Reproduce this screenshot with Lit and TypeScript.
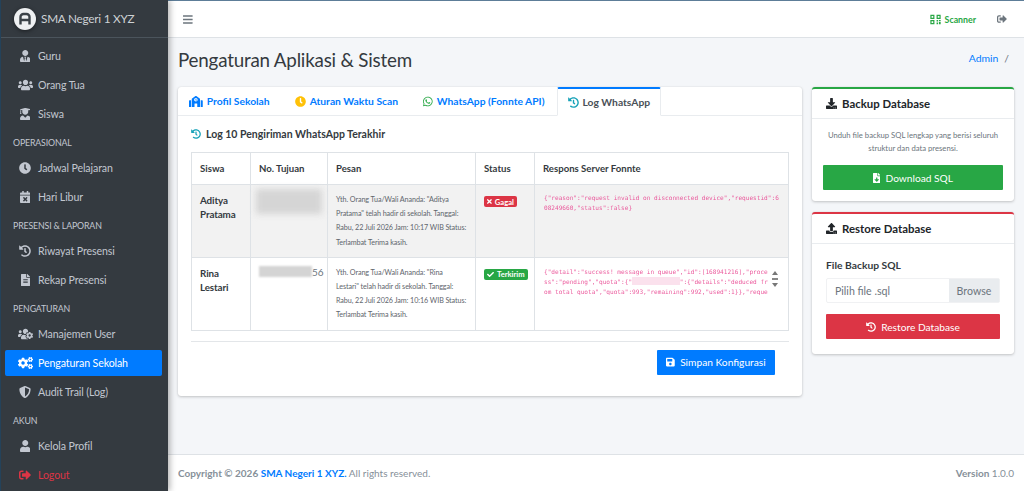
import { LitElement, html, css, svg } from "lit";
import { customElement } from "lit/decorators.js";

// font-awesome 5 style glyphs: [viewBox width, path]
const ICONS: Record<string, [number, string]> = {
  tie: [448, "M224 256c70.7 0 128-57.3 128-128S294.7 0 224 0 96 57.3 96 128s57.3 128 128 128zm95.8 32.6L272 480l-32-136 32-56h-96l32 56-32 136-47.8-191.4C56.9 292 0 350.3 0 422.4V464c0 26.5 21.5 48 48 48h352c26.5 0 48-21.5 48-48v-41.6c0-72.1-56.9-130.4-128.2-133.8z"],
  users: [640, "M96 224c35.3 0 64-28.7 64-64s-28.7-64-64-64-64 28.7-64 64 28.7 64 64 64zm448 0c35.3 0 64-28.7 64-64s-28.7-64-64-64-64 28.7-64 64 28.7 64 64 64zm32 32h-64c-17.6 0-33.5 7.1-45.1 18.6 40.3 22.1 68.9 62 75.1 109.4h66c17.7 0 32-14.3 32-32v-32c0-35.3-28.7-64-64-64zm-256 0c61.9 0 112-50.1 112-112S381.9 32 320 32 208 82.1 208 144s50.1 112 112 112zm76.8 32h-8.3c-20.8 10-43.9 16-68.5 16s-47.6-6-68.5-16h-8.3C179.6 288 128 339.6 128 403.2V432c0 26.5 21.5 48 48 48h288c26.5 0 48-21.5 48-48v-28.8c0-63.6-51.6-115.2-115.2-115.2zm-223.7-13.4C161.5 263.1 145.6 256 128 256H64c-35.3 0-64 28.7-64 64v32c0 17.7 14.3 32 32 32h65.9c6.3-47.4 34.9-87.3 75.2-109.4z"],
  grad: [448, "M319.4 320.6L224 416l-95.4-95.4C57.1 323.7 0 382.2 0 454.4v9.6c0 26.5 21.5 48 48 48h352c26.5 0 48-21.5 48-48v-9.6c0-72.2-57.1-130.7-128.6-133.8zM13.6 79.8l6.4 1.5v58.4c-7 4.2-12 11.5-12 20.3 0 8.4 4.6 15.4 11.1 19.7L3.5 242c-1.7 6.9 2.1 14 7.6 14h41.8c5.5 0 9.3-7.1 7.6-14l-15.6-62.3C51.4 175.4 56 168.4 56 160c0-8.8-5-16.1-12-20.3V87.1l66 15.9c-8.6 17.2-14 36.4-14 57 0 70.7 57.3 128 128 128s128-57.3 128-128c0-20.6-5.3-39.8-14-57l96.3-23.2c18.2-4.4 18.2-27.1 0-31.5l-190.4-46c-13-3.1-26.7-3.1-39.7 0L13.6 48.2c-18.1 4.4-18.1 27.2 0 31.6z"],
  clock: [512, "M256,8C119,8,8,119,8,256S119,504,256,504,504,393,504,256,393,8,256,8Zm92.49,313h0l-20,25a16,16,0,0,1-22.49,2.5h0l-67-49.72a40,40,0,0,1-15-31.23V112a16,16,0,0,1,16-16h32a16,16,0,0,1,16,16V256l58,42.5A16,16,0,0,1,348.49,321Z"],
  calx: [448, "M436 160H12c-6.6 0-12-5.4-12-12v-36c0-26.5 21.5-48 48-48h48V12c0-6.6 5.4-12 12-12h40c6.6 0 12 5.4 12 12v52h128V12c0-6.6 5.4-12 12-12h40c6.6 0 12 5.4 12 12v52h48c26.5 0 48 21.5 48 48v36c0 6.6-5.4 12-12 12zM12 192h424c6.6 0 12 5.4 12 12v260c0 26.5-21.5 48-48 48H48c-26.5 0-48-21.5-48-48V204c0-6.6 5.4-12 12-12zm257.3 160l48.1-48.1c4.7-4.7 4.7-12.3 0-17l-28.3-28.3c-4.7-4.7-12.3-4.7-17 0L224 306.7l-48.1-48.1c-4.7-4.7-12.3-4.7-17 0l-28.3 28.3c-4.7 4.7-4.7 12.3 0 17l48.1 48.1-48.1 48.1c-4.7 4.7-4.7 12.3 0 17l28.3 28.3c4.7 4.7 12.3 4.7 17 0l48.1-48.1 48.1 48.1c4.7 4.7 12.3 4.7 17 0l28.3-28.3c4.7-4.7 4.7-12.3 0-17L269.3 352z"],
  history: [512, "M504 255.531c.253 136.64-111.18 248.372-247.82 248.468-59.015.042-113.223-20.53-155.822-54.911-11.077-8.94-11.905-25.541-1.839-35.607l11.267-11.267c8.609-8.609 22.353-9.551 31.891-1.984C173.062 425.135 212.781 440 256 440c101.705 0 184-82.311 184-184 0-101.705-82.311-184-184-184-48.814 0-93.149 18.969-126.068 49.932l50.754 50.754c10.08 10.08 2.941 27.314-11.313 27.314H24c-8.837 0-16-7.163-16-16V38.627c0-14.254 17.234-21.393 27.314-11.314l49.372 49.372C129.209 34.136 189.552 8 256 8c136.81 0 247.747 110.78 248 247.531zm-180.912 78.784l9.823-12.63c8.138-10.463 6.253-25.542-4.21-33.679L288 256.349V152c0-13.255-10.745-24-24-24h-16c-13.255 0-24 10.745-24 24v135.651l65.409 50.874c10.463 8.137 25.541 6.253 33.679-4.21z"],
  file: [384, "M224 136V0H24C10.7 0 0 10.7 0 24v464c0 13.3 10.7 24 24 24h336c13.3 0 24-10.7 24-24V160H248c-13.2 0-24-10.8-24-24zm64 236c0 6.6-5.4 12-12 12H108c-6.6 0-12-5.4-12-12v-8c0-6.6 5.4-12 12-12h168c6.6 0 12 5.4 12 12v8zm0-64c0 6.6-5.4 12-12 12H108c-6.6 0-12-5.4-12-12v-8c0-6.6 5.4-12 12-12h168c6.6 0 12 5.4 12 12v8zm0-72v8c0 6.6-5.4 12-12 12H108c-6.6 0-12-5.4-12-12v-8c0-6.6 5.4-12 12-12h168c6.6 0 12 5.4 12 12zm96-114.1v6.1H256V0h6.1c6.4 0 12.5 2.5 17 7l97.9 98c4.5 4.5 7 10.6 7 16.9z"],
  userscog: [640, "M610.5 341.3c2.6-14.1 2.6-28.5 0-42.6l25.8-14.9c3-1.7 4.3-5.2 3.3-8.5-6.7-21.6-18.2-41.2-33.2-57.4-2.3-2.5-6-3.1-9-1.4l-25.8 14.9c-10.9-9.3-23.4-16.5-36.9-21.3v-29.8c0-3.4-2.4-6.4-5.7-7.1-22.3-5-45-4.8-66.2 0-3.3.7-5.7 3.7-5.7 7.1v29.8c-13.5 4.8-26 12-36.9 21.3l-25.8-14.9c-2.9-1.7-6.7-1.1-9 1.4-15 16.2-26.5 35.8-33.2 57.4-1 3.3.4 6.8 3.3 8.5l25.8 14.9c-2.6 14.1-2.6 28.5 0 42.6l-25.8 14.9c-3 1.7-4.3 5.2-3.3 8.5 6.7 21.6 18.2 41.1 33.2 57.4 2.3 2.5 6 3.1 9 1.4l25.8-14.9c10.9 9.3 23.4 16.5 36.9 21.3v29.8c0 3.4 2.4 6.4 5.7 7.1 22.3 5 45 4.8 66.2 0 3.3-.7 5.7-3.7 5.7-7.1v-29.8c13.5-4.8 26-12 36.9-21.3l25.8 14.9c2.9 1.7 6.7 1.1 9-1.4 15-16.2 26.5-35.8 33.2-57.4 1-3.3-.4-6.8-3.3-8.5l-25.8-14.9zM496 368.5c-26.8 0-48.5-21.8-48.5-48.5s21.8-48.5 48.5-48.5 48.5 21.8 48.5 48.5-21.7 48.5-48.5 48.5zM96 224c35.3 0 64-28.7 64-64s-28.7-64-64-64-64 28.7-64 64 28.7 64 64 64zm224 32c1.9 0 3.7-.5 5.6-.6 8.3-21.7 20.5-42.1 36.3-59.2 7.4-8 17.9-12.6 28.9-12.6 6.9 0 13.7 1.8 19.6 5.3l7.9 4.6c.8-.5 1.6-.9 2.4-1.4 7-14.6 11.2-30.8 11.2-48 0-61.9-50.1-112-112-112S208 82.1 208 144c0 61.9 50.1 112 112 112zm105.2 194.5c-2.3-1.2-4.6-2.6-6.8-3.9-8.2 4.8-15.3 9.8-27.5 9.8-10.9 0-21.4-4.6-28.9-12.6-18.3-19.8-32.3-43.9-40.2-69.6-10.7-34.5 24.9-49.7 25.8-50.3-.1-2.6-.1-5.2 0-7.8l-7.9-4.6c-3.8-2.2-7-5-9.8-8.1-3.3.2-6.5.6-9.8.6-24.6 0-47.6-6-68.5-16h-8.3C179.6 288 128 339.6 128 403.2V432c0 26.5 21.5 48 48 48h255.4c-3.7-6-6.2-12.8-6.2-20.3v-9.2zM173.1 274.6C161.5 263.1 145.6 256 128 256H64c-35.3 0-64 28.7-64 64v32c0 17.7 14.3 32 32 32h65.9c6.3-47.4 34.9-87.3 75.2-109.4z"],
  cogs: [640, "M512.1 191l-8.2 14.3c-3 5.3-9.4 7.5-15.1 5.4-11.8-4.4-22.6-10.7-32.1-18.6-4.6-3.8-5.8-10.5-2.8-15.7l8.2-14.3c-6.9-8-12.3-17.3-15.9-27.4h-16.5c-6 0-11.2-4.3-12.2-10.3-2-12-2.1-24.6 0-37.1 1-6 6.2-10.4 12.2-10.4h16.5c3.6-10.1 9-19.4 15.9-27.4l-8.2-14.3c-3-5.2-1.9-11.9 2.8-15.7 9.5-7.9 20.4-14.2 32.1-18.6 5.7-2.1 12.1.1 15.1 5.4l8.2 14.3c10.5-1.9 21.2-1.9 31.7 0L552 6.3c3-5.3 9.4-7.5 15.1-5.4 11.8 4.4 22.6 10.7 32.1 18.6 4.6 3.8 5.8 10.5 2.8 15.7l-8.2 14.3c6.9 8 12.3 17.3 15.9 27.4h16.5c6 0 11.2 4.3 12.2 10.3 2 12 2.1 24.6 0 37.1-1 6-6.2 10.4-12.2 10.4h-16.5c-3.6 10.1-9 19.4-15.9 27.4l8.2 14.3c3 5.2 1.9 11.9-2.8 15.7-9.5 7.9-20.4 14.2-32.1 18.6-5.7 2.1-12.1-.1-15.1-5.4l-8.2-14.3c-10.4 1.9-21.2 1.9-31.7 0zm-10.5-58.8c38.5 29.6 82.4-14.3 52.8-52.8-38.5-29.7-82.4 14.3-52.8 52.8zM386.3 286.1l33.7 16.8c10.1 5.8 14.5 18.1 10.5 29.1-8.9 24.2-26.4 46.4-42.6 65.8-7.4 8.9-20.2 11.1-30.3 5.3l-29.1-16.8c-16 13.7-34.6 24.6-54.9 31.7v33.6c0 11.6-8.3 21.6-19.7 23.6-24.6 4.2-50.4 4.4-75.9 0-11.5-2-20-11.9-20-23.6V418c-20.3-7.2-38.9-18-54.9-31.7L74 403c-10 5.8-22.9 3.6-30.3-5.3-16.2-19.4-33.3-41.6-42.2-65.7-4-10.9.4-23.2 10.5-29.1l33.3-16.8c-3.9-20.9-3.9-42.4 0-63.4L12 205.8c-10.1-5.8-14.6-18.1-10.5-29 8.9-24.2 26-46.4 42.2-65.8 7.4-8.9 20.2-11.1 30.3-5.3l29.1 16.8c16-13.7 34.6-24.6 54.9-31.7V57.1c0-11.5 8.2-21.5 19.6-23.5 24.6-4.2 50.5-4.4 76-.1 11.5 2 20 11.9 20 23.6v33.6c20.3 7.2 38.9 18 54.9 31.7l29.1-16.8c10-5.8 22.9-3.6 30.3 5.3 16.2 19.4 33.2 41.6 42.1 65.8 4 10.9.1 23.2-10 29.1l-33.7 16.8c3.9 21 3.9 42.5 0 63.5zm-117.6 21.1c59.2-77-28.7-164.9-105.7-105.7-59.2 77 28.7 164.9 105.7 105.7zm243.4 182.7l-8.2 14.3c-3 5.3-9.4 7.5-15.1 5.4-11.8-4.4-22.6-10.7-32.1-18.6-4.6-3.8-5.8-10.5-2.8-15.7l8.2-14.3c-6.9-8-12.3-17.3-15.9-27.4h-16.5c-6 0-11.2-4.3-12.2-10.3-2-12-2.1-24.6 0-37.1 1-6 6.2-10.4 12.2-10.4h16.5c3.6-10.1 9-19.4 15.9-27.4l-8.2-14.3c-3-5.2-1.9-11.9 2.8-15.7 9.5-7.9 20.4-14.2 32.1-18.6 5.7-2.1 12.1.1 15.1 5.4l8.2 14.3c10.5-1.9 21.2-1.9 31.7 0l8.2-14.3c3-5.3 9.4-7.5 15.1-5.4 11.8 4.4 22.6 10.7 32.1 18.6 4.6 3.8 5.8 10.5 2.8 15.7l-8.2 14.3c6.9 8 12.3 17.3 15.9 27.4h16.5c6 0 11.2 4.3 12.2 10.3 2 12 2.1 24.6 0 37.1-1 6-6.2 10.4-12.2 10.4h-16.5c-3.6 10.1-9 19.4-15.9 27.4l8.2 14.3c3 5.2 1.9 11.9-2.8 15.7-9.5 7.9-20.4 14.2-32.1 18.6-5.7 2.1-12.1-.1-15.1-5.4l-8.2-14.3c-10.4 1.9-21.2 1.9-31.7 0zM501.6 431c38.5 29.6 82.4-14.3 52.8-52.8-38.5-29.6-82.4 14.3-52.8 52.8z"],
  shield: [512, "M466.5 83.7l-192-80a48.15 48.15 0 0 0-36.9 0l-192 80C27.7 91.1 16 108.6 16 128c0 198.5 114.5 335.7 221.5 380.3 11.8 4.9 25.1 4.9 36.9 0C360.1 472.6 496 349.3 496 128c0-19.4-11.7-36.9-29.5-44.3zM256.1 446.3l-.1-381 175.9 73.3c-3.3 151.4-82.1 261.1-175.8 307.7z"],
  user: [448, "M224 256c70.7 0 128-57.3 128-128S294.7 0 224 0 96 57.3 96 128s57.3 128 128 128zm89.6 32h-16.7c-22.2 10.2-46.9 16-72.9 16s-50.6-5.8-72.9-16h-16.7C60.2 288 0 348.2 0 422.4V464c0 26.5 21.5 48 48 48h352c26.5 0 48-21.5 48-48v-41.6c0-74.2-60.2-134.4-134.4-134.4z"],
  signout: [512, "M497 273L329 441c-15 15-41 4.5-41-17v-96H152c-13.3 0-24-10.7-24-24v-96c0-13.3 10.7-24 24-24h136V88c0-21.4 25.9-32 41-17l168 168c9.3 9.4 9.3 24.6 0 34zM192 436v-40c0-6.6-5.4-12-12-12H96c-17.7 0-32-14.3-32-32V160c0-17.7 14.3-32 32-32h84c6.6 0 12-5.4 12-12V76c0-6.6-5.4-12-12-12H96c-53 0-96 43-96 96v192c0 53 43 96 96 96h84c6.6 0 12-5.4 12-12z"],
  bars: [448, "M16 132h416c8.837 0 16-7.163 16-16V76c0-8.837-7.163-16-16-16H16C7.163 60 0 67.163 0 76v40c0 8.837 7.163 16 16 16zm0 160h416c8.837 0 16-7.163 16-16v-40c0-8.837-7.163-16-16-16H16c-8.837 0-16 7.163-16 16v40c0 8.837 7.163 16 16 16zm0 160h416c8.837 0 16-7.163 16-16v-40c0-8.837-7.163-16-16-16H16c-8.837 0-16 7.163-16 16v40c0 8.837 7.163 16 16 16z"],
  school: [640, "M0 224v272c0 8.84 7.16 16 16 16h80V192H32c-17.67 0-32 14.33-32 32zm360-48h-24v-40c0-4.42-3.58-8-8-8h-16c-4.42 0-8 3.58-8 8v64c0 4.42 3.58 8 8 8h48c4.42 0 8-3.58 8-8v-16c0-4.42-3.58-8-8-8zm137.75-63.96l-160-106.67a32.02 32.02 0 0 0-35.5 0l-160 106.67A32.002 32.002 0 0 0 128 138.66V512h128V368c0-8.84 7.16-16 16-16h96c8.84 0 16 7.16 16 16v144h128V138.67c0-10.7-5.35-20.7-14.25-26.63zM320 256c-44.18 0-80-35.82-80-80s35.82-80 80-80 80 35.82 80 80-35.82 80-80 80zm288-64h-64v320h80c8.84 0 16-7.16 16-16V224c0-17.67-14.33-32-32-32z"],
  whatsapp: [448, "M380.9 97.1C339 55.1 283.2 32 223.9 32c-122.4 0-222 99.6-222 222 0 39.1 10.2 77.3 29.6 111L0 480l117.7-30.9c32.4 17.7 68.9 27 106.1 27h.1c122.3 0 224.1-99.6 224.1-222 0-59.3-25.2-115-67.1-157zm-157 341.6c-33.2 0-65.7-8.9-94-25.7l-6.7-4-69.8 18.3L72 359.2l-4.4-7c-18.5-29.4-28.2-63.3-28.2-98.2 0-101.7 82.8-184.5 184.6-184.5 49.3 0 95.6 19.2 130.4 54.1 34.8 34.9 56.2 81.2 56.1 130.5 0 101.8-84.9 184.6-186.6 184.6zm101.2-138.2c-5.5-2.8-32.8-16.2-37.9-18-5.1-1.9-8.8-2.8-12.5 2.8-3.7 5.6-14.3 18-17.6 21.8-3.2 3.7-6.5 4.2-12 1.4-32.6-16.3-54-29.1-75.5-66-5.7-9.8 5.7-9.1 16.3-30.3 1.8-3.7.9-6.9-.5-9.7-1.4-2.8-12.5-30.1-17.1-41.2-4.5-10.8-9.1-9.3-12.5-9.5-3.2-.2-6.9-.2-10.6-.2-3.7 0-9.7 1.4-14.8 6.9-5.1 5.6-19.4 19-19.4 46.3 0 27.3 19.9 53.7 22.6 57.4 2.8 3.7 39.1 59.7 94.8 83.8 35.2 15.2 49 16.5 66.6 13.9 10.7-1.6 32.8-13.4 37.4-26.4 4.6-13 4.6-24.1 3.2-26.4-1.3-2.5-5-3.9-10.5-6.6z"],
  check: [512, "M173.898 439.404l-166.4-166.4c-9.997-9.997-9.997-26.206 0-36.204l36.203-36.204c9.997-9.998 26.207-9.998 36.204 0L192 312.69 432.095 72.596c9.997-9.997 26.207-9.997 36.204 0l36.203 36.204c9.997 9.997 9.997 26.206 0 36.204l-294.4 294.401c-9.998 9.997-26.207 9.997-36.204-.001z"],
  times: [352, "M242.72 256l100.07-100.07c12.28-12.28 12.28-32.19 0-44.48l-22.24-22.24c-12.28-12.28-32.19-12.28-44.48 0L176 189.28 75.93 89.21c-12.28-12.28-32.19-12.28-44.48 0L9.21 111.45c-12.28 12.28-12.28 32.19 0 44.48L109.28 256 9.21 356.07c-12.28 12.28-12.28 32.19 0 44.48l22.24 22.24c12.28 12.28 32.2 12.28 44.48 0L176 322.72l100.07 100.07c12.28 12.28 32.2 12.28 44.48 0l22.24-22.24c12.28-12.28 12.28-32.19 0-44.48L242.72 256z"],
  save: [448, "M433.941 129.941l-83.882-83.882A48 48 0 0 0 316.118 32H48C21.49 32 0 53.49 0 80v352c0 26.51 21.49 48 48 48h352c26.51 0 48-21.49 48-48V163.882a48 48 0 0 0-14.059-33.941zM224 416c-35.346 0-64-28.654-64-64 0-35.346 28.654-64 64-64s64 28.654 64 64c0 35.346-28.654 64-64 64zm96-304.52V212c0 6.627-5.373 12-12 12H76c-6.627 0-12-5.373-12-12V108c0-6.627 5.373-12 12-12h228.52c3.183 0 6.235 1.264 8.485 3.515l3.48 3.48A11.996 11.996 0 0 1 320 111.48z"],
  download: [512, "M216 0h80c13.3 0 24 10.7 24 24v168h87.7c17.8 0 26.7 21.5 14.1 34.1L269.7 378.3c-7.5 7.5-19.8 7.5-27.3 0L90.1 226.1c-12.6-12.6-3.7-34.1 14.1-34.1H192V24c0-13.3 10.7-24 24-24zm296 376v112c0 13.3-10.7 24-24 24H24c-13.3 0-24-10.7-24-24V376c0-13.3 10.7-24 24-24h146.7l49 49c20.1 20.1 52.5 20.1 72.6 0l49-49H488c13.3 0 24 10.7 24 24zm-124 88c0-11-9-20-20-20s-20 9-20 20 9 20 20 20 20-9 20-20zm64 0c0-11-9-20-20-20s-20 9-20 20 9 20 20 20 20-9 20-20z"],
  upload: [512, "M296 384h-80c-13.3 0-24-10.7-24-24V192h-87.7c-17.8 0-26.7-21.5-14.1-34.1L242.3 5.7c7.5-7.5 19.8-7.5 27.3 0l152.2 152.2c12.6 12.6 3.7 34.1-14.1 34.1H320v168c0 13.3-10.7 24-24 24zm216-8v112c0 13.3-10.7 24-24 24H24c-13.3 0-24-10.7-24-24V376c0-13.3 10.7-24 24-24h136v8c0 30.9 25.1 56 56 56h80c30.9 0 56-25.1 56-56v-8h136c13.3 0 24 10.7 24 24zm-124 88c0-11-9-20-20-20s-20 9-20 20 9 20 20 20 20-9 20-20zm64 0c0-11-9-20-20-20s-20 9-20 20 9 20 20 20 20-9 20-20z"],
  filedown: [384, "M224 136V0H24C10.7 0 0 10.7 0 24v464c0 13.3 10.7 24 24 24h336c13.3 0 24-10.7 24-24V160H248c-13.2 0-24-10.8-24-24zm76.45 211.36l-96.42 95.7c-6.65 6.61-17.39 6.61-24.04 0l-96.42-95.7C73.42 337.29 80.54 320 94.82 320H160v-80c0-8.84 7.16-16 16-16h32c8.84 0 16 7.16 16 16v80h65.18c14.28 0 21.4 17.29 11.27 27.36zM377 105L279.1 7c-4.5-4.5-10.6-7-17-7H256v128h128v-6.1c0-6.3-2.5-12.4-7-16.9z"],
  qr: [512, "M16 40h190v190H16V40zm56 56v78h78V96H72zM306 40h190v190H306V40zm56 56v78h78V96h-78zM16 282h190v190H16V282zm56 56v78h78v-78H72zM306 282h70v70h-70v-70zm110 0h80v50h-80v-50zM306 392h70v80h-70v-80zm110-20h80v100h-80V372z"],
};

const icon = (name: string, cls = "") => {
  const [w, d] = ICONS[name];
  return html`<svg class="ic ${cls}" viewBox="0 0 ${w} 512" fill="currentColor">${svg`<path d=${d}></path>`}</svg>`;
};

type NavEntry =
  | { head: string }
  | { label: string; icon: string; active?: boolean; logout?: boolean };

const NAV: NavEntry[] = [
  { label: "Guru", icon: "tie" },
  { label: "Orang Tua", icon: "users" },
  { label: "Siswa", icon: "grad" },
  { head: "OPERASIONAL" },
  { label: "Jadwal Pelajaran", icon: "clock" },
  { label: "Hari Libur", icon: "calx" },
  { head: "PRESENSI & LAPORAN" },
  { label: "Riwayat Presensi", icon: "history" },
  { label: "Rekap Presensi", icon: "file" },
  { head: "PENGATURAN" },
  { label: "Manajemen User", icon: "userscog" },
  { label: "Pengaturan Sekolah", icon: "cogs", active: true },
  { label: "Audit Trail (Log)", icon: "shield" },
  { head: "AKUN" },
  { label: "Kelola Profil", icon: "user" },
  { label: "Logout", icon: "signout", logout: true },
];

const TABS = [
  { label: "Profil Sekolah", icon: "school", cls: "t-blue" },
  { label: "Aturan Waktu Scan", icon: "clock", cls: "t-yellow" },
  { label: "WhatsApp (Fonnte API)", icon: "whatsapp", cls: "t-green" },
  { label: "Log WhatsApp", icon: "history", cls: "t-teal", active: true },
];

@customElement("app-root")
export class AppRoot extends LitElement {
  private renderSidebar() {
    return html`
      <aside class="sidebar">
        <div class="brand">
          <svg class="logo" viewBox="0 0 22 22">
            <circle cx="11" cy="11" r="11" fill="#eef0f2"></circle>
            <path d="M6.5 16.5V9a3 3 0 0 1 3-3h3a3 3 0 0 1 3 3v7.5M6.5 12h9" fill="none" stroke="#3b4248" stroke-width="2.4"></path>
          </svg>
          <span class="brand-text">SMA Negeri 1 XYZ</span>
        </div>
        <nav class="nav">
          ${NAV.map((n) =>
            "head" in n
              ? html`<div class="nav-head">${n.head}</div>`
              : html`<a class="nav-item ${n.active ? "active" : ""} ${n.logout ? "logout" : ""}">
                  <span class="nav-ic">${icon(n.icon)}</span>${n.label}
                </a>`
          )}
        </nav>
      </aside>
    `;
  }

  private renderTable() {
    return html`
      <table>
        <thead>
          <tr>
            <th class="c1">Siswa</th>
            <th class="c2">No. Tujuan</th>
            <th class="c3">Pesan</th>
            <th class="c4">Status</th>
            <th class="c5">Respons Server Fonnte</th>
          </tr>
        </thead>
        <tbody>
          <tr class="odd">
            <td class="name">Aditya Pratama</td>
            <td class="phone-a"><div class="blur-a"></div></td>
            <td class="msg">Yth. Orang Tua/Wali Ananda: "Aditya Pratama" telah hadir di sekolah. Tanggal: Rabu, 22 Juli 2026 Jam: 10:17 WIB Status: Terlambat Terima kasih.</td>
            <td><span class="badge bad">${icon("times")}Gagal</span></td>
            <td class="resp"><code>{"reason":"request invalid on disconnected device","requestid":608249660,"status":false}</code></td>
          </tr>
          <tr>
            <td class="name">Rina Lestari</td>
            <td class="phone-b"><span class="blur-b"></span>56</td>
            <td class="msg">Yth. Orang Tua/Wali Ananda: "Rina Lestari" telah hadir di sekolah. Tanggal: Rabu, 22 Juli 2026 Jam: 10:16 WIB Status: Terlambat Terima kasih.</td>
            <td><span class="badge ok">${icon("check")}Terkirim</span></td>
            <td class="resp">
              <div class="scroll">
                <code class="clip">{"detail":"success! message in queue","id":[168941216],"process":"pending","quota":{"<span class="redact"></span>":{"details":"deduced from total quota","quota":993,"remaining":992,"used":1}},"reque</code>
                <div class="sbar"><i class="up"></i><i class="thumb"></i><i class="down"></i></div>
              </div>
            </td>
          </tr>
        </tbody>
      </table>
    `;
  }

  render() {
    return html`
      <div class="shell">
        ${this.renderSidebar()}
        <div class="main">
          <header class="topbar">
            <span class="burger">${icon("bars")}</span>
            <div class="top-right">
              <span class="scanner">${icon("qr")}Scanner</span>
              <span class="top-out">${icon("signout")}</span>
            </div>
          </header>
          <div class="content">
            <div class="page-head">
              <h1>Pengaturan Aplikasi &amp; Sistem</h1>
              <div class="crumb"><a>Admin</a><span>/</span></div>
            </div>
            <div class="columns">
              <section class="card left">
                <div class="tabs">
                  ${TABS.map(
                    (t) => html`<a class="tab ${t.active ? "active" : ""}"><span class=${t.cls}>${icon(t.icon)}</span>${t.label}</a>`
                  )}
                </div>
                <div class="pane">
                  <div class="pane-title"><span class="t-teal">${icon("history")}</span>Log 10 Pengiriman WhatsApp Terakhir</div>
                  ${this.renderTable()}
                  <hr />
                  <div class="save-row">
                    <button class="btn btn-primary">${icon("save")}Simpan Konfigurasi</button>
                  </div>
                </div>
              </section>
              <div class="side">
                <section class="card top-green">
                  <div class="side-head">${icon("download")}Backup Database</div>
                  <div class="side-body center">
                    <p>Unduh file backup SQL lengkap yang berisi seluruh struktur dan data presensi.</p>
                    <button class="btn btn-success block">${icon("filedown")}Download SQL</button>
                  </div>
                </section>
                <section class="card top-red">
                  <div class="side-head">${icon("upload")}Restore Database</div>
                  <div class="side-body restore">
                    <label>File Backup SQL</label>
                    <div class="file">
                      <span class="file-name">Pilih file .sql</span>
                      <span class="file-btn">Browse</span>
                    </div>
                    <button class="btn btn-danger block">${icon("history")}Restore Database</button>
                  </div>
                </section>
              </div>
            </div>
          </div>
          <footer class="footer">
            <div><b>Copyright © 2026 <a>SMA Negeri 1 XYZ.</a></b> All rights reserved.</div>
            <div><b>Version</b> 1.0.0</div>
          </footer>
        </div>
      </div>
    `;
  }

  static styles = css`
    :host {
      display: block;
      width: 1024px;
      height: 491px;
      overflow: hidden;
      font-family: Lato, "Noto Sans", sans-serif;
      color: #212529;
      font-size: 11px;
    }
    * {
      box-sizing: border-box;
    }
    .ic {
      display: block;
      height: 1em;
      width: auto;
      flex: none;
    }
    .shell {
      display: flex;
      height: 491px;
      border-top: 1px solid #5d7d98;
      background: #f4f6f9;
    }

    /* sidebar */
    .sidebar {
      width: 168px;
      flex: none;
      background: #343a40;
      border-left: 1px solid #24425a;
      box-shadow: 2px 0 6px rgba(0, 0, 0, 0.3);
      z-index: 2;
      margin-top: -1px;
    }
    .brand {
      height: 38px;
      display: flex;
      align-items: center;
      padding-left: 13px;
      gap: 5px;
      border-bottom: 1px solid #4b545c;
    }
    .logo {
      width: 22px;
      height: 22px;
      flex: none;
      filter: drop-shadow(0 1px 2px rgba(0, 0, 0, 0.5));
    }
    .brand-text {
      font-size: 11.8px;
      letter-spacing: -0.25px;
      color: #ced2d6;
      white-space: nowrap;
    }
    .nav {
      padding: 5px 6px 0 4px;
      display: flex;
      flex-direction: column;
      gap: 3px;
    }
    .nav-item {
      height: 26px;
      display: flex;
      align-items: center;
      padding-left: 12px;
      gap: 5px;
      border-radius: 2px;
      color: #c2c7d0;
      font-size: 10.6px;
      letter-spacing: -0.1px;
      white-space: nowrap;
    }
    .nav-ic {
      width: 16px;
      display: flex;
      justify-content: center;
      font-size: 12px;
    }
    .nav-item.active {
      background: #007bff;
      color: #fff;
    }
    .nav-item.logout {
      color: #dc3545;
    }
    .nav-head {
      height: 22px;
      padding-left: 8px;
      line-height: 26px;
      font-size: 8.8px;
      letter-spacing: -0.15px;
      color: #c2c7d0;
      white-space: nowrap;
    }

    /* main column */
    .main {
      flex: 1;
      min-width: 0;
      display: flex;
      flex-direction: column;
    }
    .topbar {
      height: 37px;
      flex: none;
      background: #fff;
      border-bottom: 1px solid #dee2e6;
      display: flex;
      align-items: center;
      justify-content: space-between;
      padding: 0 17px 0 15px;
      color: #6c757d;
    }
    .burger {
      font-size: 11px;
    }
    .top-right {
      display: flex;
      align-items: center;
      gap: 21px;
    }
    .scanner {
      display: flex;
      align-items: center;
      gap: 4px;
      color: #28a745;
      font-weight: 700;
      font-size: 8.8px;
    }
    .scanner .ic {
      font-size: 11px;
    }
    .top-out {
      font-size: 10px;
    }
    .content {
      flex: 1;
      min-height: 0;
      padding: 0 10px;
    }
    .page-head {
      height: 49px;
      padding-bottom: 6px;
      display: flex;
      align-items: center;
      justify-content: space-between;
    }
    h1 {
      margin: 0;
      font-size: 18.8px;
      letter-spacing: -0.2px;
      font-weight: 400;
      color: #343a40;
      white-space: nowrap;
    }
    .crumb {
      display: flex;
      gap: 6px;
      font-size: 10.4px;
      color: #6c757d;
      padding-right: 5px;
      margin-top: -4px;
    }
    .crumb a {
      color: #007bff;
    }
    .columns {
      display: grid;
      grid-template-columns: 624px 202px;
      gap: 10px;
      align-items: start;
    }
    .card {
      background: #fff;
      border-radius: 3px;
      box-shadow: 0 0 1px rgba(0, 0, 0, 0.125), 0 1px 3px rgba(0, 0, 0, 0.2);
    }
    .left {
      height: 309px;
    }
    .tabs {
      height: 29px;
      display: flex;
      padding-left: 3px;
      border-bottom: 1px solid #e9ecef;
    }
    .tab {
      display: flex;
      align-items: center;
      gap: 4px;
      padding: 0 8px;
      margin-right: 9px;
      font-size: 10.3px;
      font-weight: 700;
      color: #007bff;
      white-space: nowrap;
    }
    .tab .ic {
      font-size: 11px;
    }
    .tab.active {
      color: #495057;
      background: #fff;
      height: 29px;
      border: 1px solid #e9ecef;
      border-top: 2px solid #007bff;
      border-bottom-color: #fff;
      border-radius: 2px 2px 0 0;
      padding: 0 10px;
      margin-left: -5px;
    }
    .t-blue {
      color: #007bff;
    }
    .t-yellow {
      color: #ffc107;
    }
    .t-green {
      color: #28a745;
    }
    .t-teal {
      color: #17a2b8;
    }
    .pane {
      padding: 0 13px;
    }
    .pane-title {
      height: 36px;
      display: flex;
      align-items: center;
      gap: 5px;
      font-size: 10.5px;
      font-weight: 700;
      color: #343a40;
    }
    .pane-title .ic {
      font-size: 10px;
    }

    /* log table */
    table {
      width: 598px;
      table-layout: fixed;
      border-collapse: collapse;
    }
    th,
    td {
      border: 1px solid #dee2e6;
      padding: 8px 8px;
      text-align: left;
      vertical-align: top;
    }
    th {
      height: 32px;
      padding: 0 8px;
      vertical-align: middle;
      font-size: 9.6px;
      font-weight: 700;
      color: #343a40;
    }
    .c1 {
      width: 59px;
    }
    .c2 {
      width: 77px;
    }
    .c3 {
      width: 148px;
    }
    .c4 {
      width: 59px;
    }
    tbody tr {
      height: 72px;
    }
    tr.odd td {
      background: #f2f2f2;
    }
    td.name {
      padding-top: 8px;
      font-size: 9.8px;
      letter-spacing: -0.1px;
      font-weight: 700;
      line-height: 14px;
      color: #343a40;
    }
    td.msg {
      padding-bottom: 7px;
      font-size: 7.2px;
      letter-spacing: -0.08px;
      line-height: 14.2px;
      color: #5f666d;
    }
    td.phone-a {
      padding: 4px 5px;
    }
    .blur-a {
      height: 25px;
      background: #d5d5d5;
      filter: blur(3px);
    }
    td.phone-b {
      padding: 8px 7px 0 8px;
      font-size: 10px;
      color: #6c757d;
      white-space: nowrap;
    }
    .blur-b {
      display: inline-block;
      width: 53px;
      height: 11px;
      background: #d4d4d4;
      filter: blur(1px);
      vertical-align: -1px;
    }
    .badge {
      display: flex;
      width: fit-content;
      align-items: center;
      gap: 3px;
      height: 11px;
      padding: 0 3px;
      margin-top: 3px;
      border-radius: 2px;
      color: #fff;
      font-size: 7.6px;
      font-weight: 700;
      white-space: nowrap;
    }
    .badge .ic {
      font-size: 7px;
    }
    .bad {
      background: #dc3545;
    }
    .ok {
      background: #28a745;
    }
    td.resp {
      padding: 8px 9px 0;
    }
    code {
      display: block;
      font-family: "DejaVu Sans Mono", "Liberation Mono", monospace;
      font-size: 6.1px;
      line-height: 10px;
      color: #e83e8c;
      word-break: break-all;
      opacity: 0.85;
    }
    .scroll {
      display: flex;
      height: 31px;
      margin-top: 1px;
    }
    .clip {
      flex: none;
      width: 226px;
      height: 28px;
      overflow: hidden;
    }
    .redact {
      display: inline-block;
      width: 13ch;
      height: 8px;
      vertical-align: -1px;
      background: #fbdcea;
    }
    .sbar {
      width: 9px;
      flex: none;
      display: flex;
      flex-direction: column;
      align-items: center;
      gap: 3px;
      padding-top: 4px;
    }
    .sbar i {
      display: block;
    }
    .sbar .up {
      border: 3px solid transparent;
      border-top: 0;
      border-bottom: 4px solid #777;
    }
    .sbar .thumb {
      width: 6px;
      height: 2px;
      background: #888;
    }
    .sbar .down {
      border: 3px solid transparent;
      border-bottom: 0;
      border-top: 4px solid #777;
    }
    hr {
      border: 0;
      border-top: 1px solid #e3e6e9;
      margin: 10px 0 8px;
      width: 598px;
    }
    .save-row {
      display: flex;
      justify-content: flex-end;
      width: 584px;
    }

    /* buttons */
    .btn {
      display: flex;
      align-items: center;
      justify-content: center;
      gap: 5px;
      height: 25px;
      border: 0;
      border-radius: 1px;
      color: #fff;
      font-family: inherit;
      font-size: 10.2px;
      padding: 0;
    }
    .btn .ic {
      font-size: 10px;
    }
    .btn-primary {
      width: 118px;
      background: #007bff;
    }
    .btn-success {
      background: #28a745;
    }
    .btn-danger {
      background: #dc3545;
    }
    .block {
      width: 100%;
    }

    /* right column */
    .side {
      display: flex;
      flex-direction: column;
      gap: 11px;
    }
    .top-green {
      border-top: 2px solid #28a745;
      height: 114px;
    }
    .top-red {
      border-top: 2px solid #dc3545;
      height: 142px;
    }
    .side-head {
      height: 30px;
      display: flex;
      align-items: center;
      gap: 5px;
      padding-left: 14px;
      font-size: 11.4px;
      font-weight: 700;
      color: #212529;
      border-bottom: 1px solid #e9ecef;
    }
    .side-head .ic {
      font-size: 11px;
    }
    .side-body {
      padding: 0 11px;
    }
    .center p {
      margin: 0;
      padding: 10px 0;
      text-align: center;
      font-size: 7.7px;
      line-height: 13px;
      color: #6c757d;
    }
    .restore {
      padding: 0 14px;
    }
    label {
      display: block;
      padding: 14px 0 6px;
      font-size: 10.3px;
      line-height: 14px;
      font-weight: 700;
      color: #343a40;
    }
    .file {
      display: flex;
      height: 25px;
      border: 1px solid #f0f1f3;
      border-radius: 2px;
      font-size: 10.6px;
      color: #6c757d;
      margin-bottom: 11px;
    }
    .file-name {
      flex: 1;
      display: flex;
      align-items: center;
      padding-left: 8px;
    }
    .file-btn {
      width: 50px;
      display: flex;
      align-items: center;
      justify-content: center;
      background: #e9ecef;
    }

    /* footer */
    .footer {
      height: 37px;
      flex: none;
      background: #fff;
      border-top: 1px solid #dee2e6;
      display: flex;
      align-items: center;
      justify-content: space-between;
      padding: 0 10px;
      font-size: 10px;
      color: #869099;
    }
    .footer a {
      color: #007bff;
    }
  `;
}
